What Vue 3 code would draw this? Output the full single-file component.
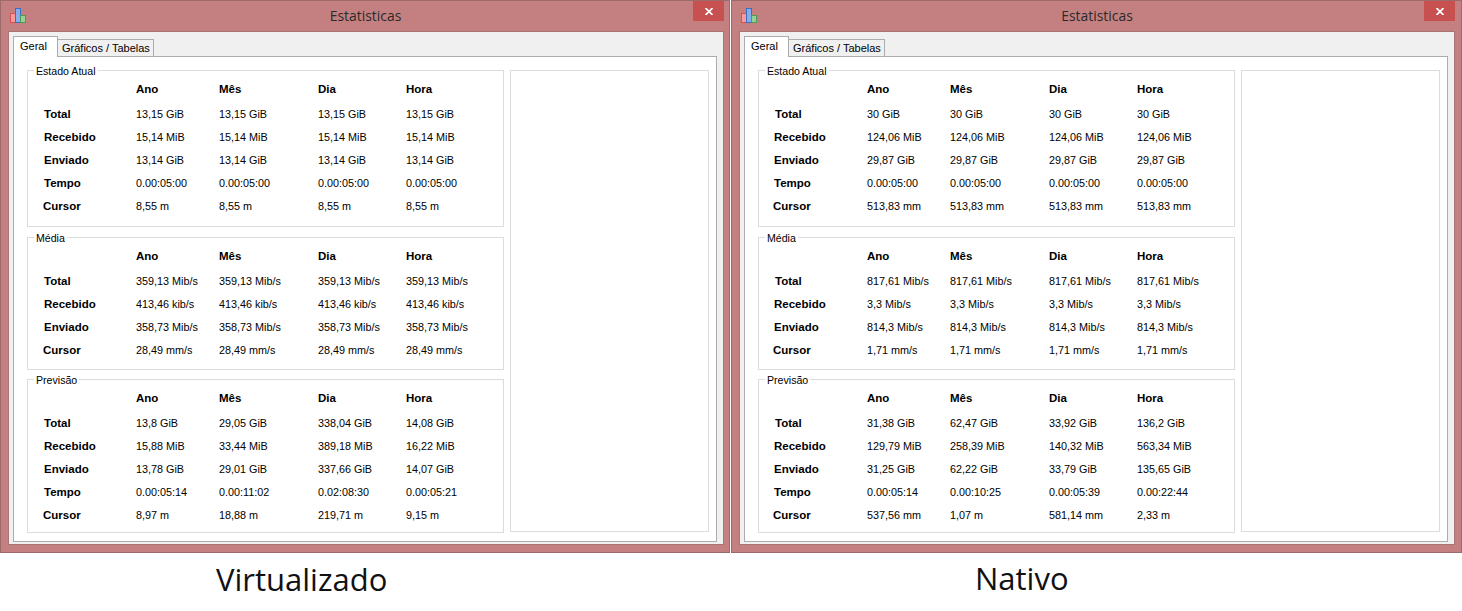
<script setup>
const heads = ['Ano', 'Mês', 'Dia', 'Hora']
const rows = (label, v, indent = 16) => ({ label, v, indent })
const same = (x) => [x, x, x, x]
const windows = [
  {
    groups: [
      { title: 'Estado Atual', cls: 'g1', rows: [
        rows('Total', same('13,15 GiB')), rows('Recebido', same('15,14 MiB')), rows('Enviado', same('13,14 GiB')),
        rows('Tempo', same('0.00:05:00')), rows('Cursor', same('8,55 m'), 15) ] },
      { title: 'Média', cls: 'g2', rows: [
        rows('Total', same('359,13 Mib/s')), rows('Recebido', same('413,46 kib/s')), rows('Enviado', same('358,73 Mib/s')),
        rows('Cursor', same('28,49 mm/s'), 15) ] },
      { title: 'Previsão', cls: 'g3', rows: [
        rows('Total', ['13,8 GiB', '29,05 GiB', '338,04 GiB', '14,08 GiB']),
        rows('Recebido', ['15,88 MiB', '33,44 MiB', '389,18 MiB', '16,22 MiB']),
        rows('Enviado', ['13,78 GiB', '29,01 GiB', '337,66 GiB', '14,07 GiB']),
        rows('Tempo', ['0.00:05:14', '0.00:11:02', '0.02:08:30', '0.00:05:21']),
        rows('Cursor', ['8,97 m', '18,88 m', '219,71 m', '9,15 m'], 15) ] }
    ]
  },
  {
    groups: [
      { title: 'Estado Atual', cls: 'g1', rows: [
        rows('Total', same('30 GiB')), rows('Recebido', same('124,06 MiB'), 15), rows('Enviado', same('29,87 GiB'), 15),
        rows('Tempo', same('0.00:05:00'), 15), rows('Cursor', same('513,83 mm'), 14) ] },
      { title: 'Média', cls: 'g2', rows: [
        rows('Total', same('817,61 Mib/s')), rows('Recebido', same('3,3 Mib/s'), 15), rows('Enviado', same('814,3 Mib/s'), 15),
        rows('Cursor', same('1,71 mm/s'), 14) ] },
      { title: 'Previsão', cls: 'g3', rows: [
        rows('Total', ['31,38 GiB', '62,47 GiB', '33,92 GiB', '136,2 GiB']),
        rows('Recebido', ['129,79 MiB', '258,39 MiB', '140,32 MiB', '563,34 MiB'], 15),
        rows('Enviado', ['31,25 GiB', '62,22 GiB', '33,79 GiB', '135,65 GiB'], 15),
        rows('Tempo', ['0.00:05:14', '0.00:10:25', '0.00:05:39', '0.00:22:44'], 15),
        rows('Cursor', ['537,56 mm', '1,07 m', '581,14 mm', '2,33 m'], 14) ] }
    ]
  }
]
</script>

<template>
  <div class="page">
    <div class="windows">
      <section v-for="(w, wi) in windows" :key="wi" class="window">
        <header class="titlebar">
          <svg class="appicon" width="17" height="15" viewBox="0 0 17 15">
            <rect x="0.5" y="5.5" width="5" height="9" fill="#f89a9a" stroke="#dc4f4f" />
            <rect x="5.5" y="0.5" width="5" height="14" fill="#86aeea" stroke="#3b6fc4" />
            <rect x="10.5" y="7.5" width="5" height="7" fill="#98cf98" stroke="#4f9a55" />
          </svg>
          <span class="title">Estatisticas</span>
          <button class="close" type="button" aria-label="Fechar">
            <svg width="8" height="7" viewBox="0 0 8 7">
              <path d="M0.5 0 L7.5 7 M7.5 0 L0.5 7" stroke="#fff" stroke-width="1.7" fill="none" />
            </svg>
          </button>
        </header>
        <div class="client">
          <nav class="tabs">
            <span class="tab active">Geral</span>
            <span class="tab">Gráficos / Tabelas</span>
          </nav>
          <div class="panel">
            <div class="groups">
              <div v-for="g in w.groups" :key="g.title" class="group" :class="g.cls">
                <span class="legend">{{ g.title }}</span>
                <div class="row head">
                  <span></span>
                  <b v-for="h in heads" :key="h">{{ h }}</b>
                </div>
                <div v-for="r in g.rows" :key="r.label" class="row">
                  <b :style="{ paddingLeft: r.indent + 'px' }">{{ r.label }}</b>
                  <span v-for="(c, i) in r.v" :key="i">{{ c }}</span>
                </div>
              </div>
            </div>
            <div class="side"></div>
          </div>
        </div>
      </section>
    </div>
    <div class="captions">
      <div class="caption first">Virtualizado</div>
      <div class="caption second">Nativo</div>
    </div>
  </div>
</template>

<style>
html, body { margin: 0; background: #fff; overflow: hidden; }
</style>

<style scoped>
.page {
  width: 1462px;
  height: 611px;
  font-family: "Liberation Sans", Arial, sans-serif;
  font-size: 11px;
  color: #000;
  background: #fff;
}
.windows { display: flex; gap: 1px; }
.window {
  flex: 0 0 730px;
  box-sizing: border-box;
  height: 553px;
  background: #c48080;
  border: 1px solid #9c6a6a;
  padding: 0 5px 7px 7px;
  display: flex;
  flex-direction: column;
}
.window:last-child { flex-basis: 731px; }
.titlebar {
  height: 30px;
  flex: none;
  display: flex;
  position: relative;
  align-items: flex-start;
  justify-content: center;
}
.appicon { position: absolute; left: 2px; top: 7px; }
.title {
  font-family: "Open Sans", sans-serif;
  font-size: 13.9px;
  line-height: 18px;
  margin-top: 6px;
  color: #2a2a2a;
  margin-right: 1px;
}
.close {
  position: absolute;
  left: 685px;
  top: 0;
  width: 31px;
  height: 20px;
  padding: 0;
  border: 0;
  background: #c75050;
  display: flex;
  align-items: center;
  justify-content: center;
}
.client {
  flex: none;
  box-sizing: border-box;
  width: 716px;
  height: 514px;
  background: #f0f0f0;
  border: 1px solid #a87474;
  padding: 4px 6px 4px 4px;
  display: flex;
  flex-direction: column;
}
.tabs { display: flex; align-items: flex-end; height: 20px; flex: none; }
.tab {
  box-sizing: border-box;
  height: 17px;
  width: 96px;
  border: 1px solid #acacac;
  border-bottom: 0;
  border-left: 0;
  padding-left: 4px;
  line-height: 17px;
  background: #f0f0f0;
  white-space: nowrap;
}
.tab.active {
  width: 45px;
  height: 21px;
  border-left: 1px solid #acacac;
  padding-left: 6px;
  background: #fff;
  line-height: 18px;
  position: relative;
  z-index: 1;
  margin-bottom: -1px;
}
.panel {
  flex: 1;
  box-sizing: border-box;
  background: #fff;
  border: 1px solid #acacac;
  padding: 13px 7px 8px 13px;
  display: flex;
  gap: 6px;
}
.groups { width: 477px; display: flex; flex-direction: column; }
.group {
  box-sizing: border-box;
  position: relative;
  border: 1px solid #dcdcdc;
  padding-top: 7px;
}
.g1 { height: 157px; margin-bottom: 10px; }
.g2 { height: 133px; margin-bottom: 9px; }
.g3 { height: 154px; }
.legend {
  position: absolute;
  left: 6px;
  top: -7px;
  background: #fff;
  padding: 0 2px;
  line-height: 14px;
  font-size: 10.6px;
}
.row {
  display: grid;
  grid-template-columns: 108px 83px 99px 88px 1fr;
  height: 23px;
  line-height: 23px;
  font-size: 10.8px;
  white-space: nowrap;
}
.row b { font-weight: 700; font-size: 11.5px; }
.head { margin-bottom: 2px; }
.side {
  box-sizing: border-box;
  width: 199px;
  height: 462px;
  border: 1px solid #dcdcdc;
}
.captions { display: flex; gap: 1px; }
.caption {
  font-family: "Open Sans", sans-serif;
  line-height: 40px;
  font-size: 31px;
  color: #111;
  flex: 0 0 730px;
  box-sizing: border-box;
  padding-top: 6px;
}
.first { padding-left: 216px; }
.second { padding-left: 244px; flex-basis: 731px; padding-top: 5px; }
</style>
